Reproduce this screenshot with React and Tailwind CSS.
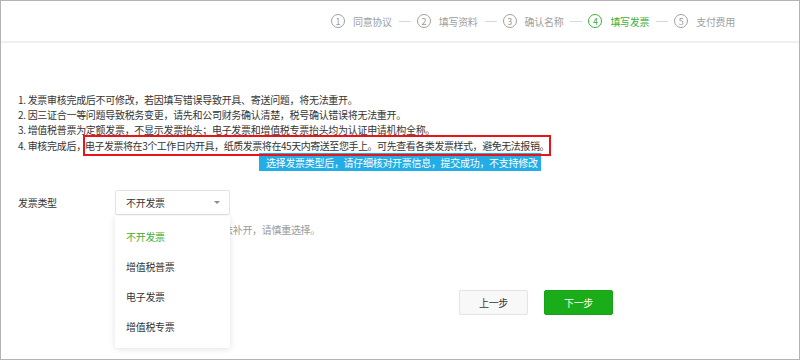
import React from "react";

const steps = [
  { n: "1", label: "同意协议" },
  { n: "2", label: "填写资料" },
  { n: "3", label: "确认名称" },
  { n: "4", label: "填写发票", active: true },
  { n: "5", label: "支付费用" },
];

const options = ["不开发票", "增值税普票", "电子发票", "增值税专票"];

const App = () => {
  return (
    <div
      className="w-[800px] h-[360px] bg-white border border-[#b4b4b4] overflow-hidden text-[10px] text-[#353535] tracking-[-0.3px]"
      style={{ fontFamily: '"Noto Sans CJK SC", "Noto Sans", sans-serif' }}
    >
      {/* steps header */}
      <div className="h-[42px] border-b-2 border-[#f0f0f0] flex items-center justify-end pr-[64px]">
        {steps.map((s, i) => (
          <div key={s.n} className="flex items-center">
            <span
              className={`w-[14px] h-[14px] rounded-full border flex items-center justify-center text-[9px] leading-none ${
                s.active ? "border-[#3cb035] text-[#3cb035]" : "border-[#a0a0a0] text-[#9a9a9a]"
              }`}
            >
              {s.n}
            </span>
            <span
              className={`ml-[8px] ${s.active ? "text-[#3cb035]" : "text-[#a0a0a0]"}`}
            >
              {s.label}
            </span>
            {i < steps.length - 1 && (
              <span className="ml-[7px] mr-[6px] w-[12px] h-px bg-[#d8d8d8]" />
            )}
          </div>
        ))}
      </div>

      {/* notes */}
      <div className="pl-[17px] pt-[49px] leading-[15px]">
        <p>1. 发票审核完成后不可修改，若因填写错误导致开具、寄送问题，将无法重开。</p>
        <p>2. 因三证合一等问题导致税务变更，请先和公司财务确认清楚，税号确认错误将无法重开。</p>
        <p>3. 增值税普票为定额发票，不显示发票抬头；电子发票和增值税专票抬头均为认证申请机构全称。</p>
        <p className="mt-[1px]">
          4. 审核完成后，
          <span className="-ml-[3px] border-2 border-[#e8141a] py-[1px] tracking-[-0.45px]">
            电子发票将在3个工作日内开具，纸质发票将在45天内寄送至您手上。可先查看各类发票样式，避免无法报销。
          </span>
        </p>
        <div className="ml-[241px] mt-0 w-[282px] h-[18px] bg-[#22ade6] text-white flex items-center pl-[7px]">
          选择发票类型后，请仔细核对开票信息，提交成功，不支持修改
        </div>
      </div>

      {/* invoice type */}
      <div className="flex mt-[19px] pl-[17px]">
        <div className="w-[97px] pt-[5px]">发票类型</div>
        <div className="relative">
          <div className="w-[115px] h-[25px] border border-[#e3e3e3] rounded-[2px] flex items-center justify-between pl-[10px] pr-[9px]">
            <span>不开发票</span>
            <span className="w-0 h-0 border-l-[3px] border-r-[3px] border-t-[3px] border-l-transparent border-r-transparent border-t-[#8c8c8c]" />
          </div>
          <div className="mt-[7px] pl-[11px] text-[#9a9a9a] whitespace-nowrap">
            选择不开发票后，将无法补开，请慎重选择。
          </div>
          <div className="absolute left-0 top-[26px] w-[115px] h-[132px] bg-white rounded-[2px] shadow-[0_1px_6px_rgba(0,0,0,0.12)] pt-[6px]">
            {options.map((o, i) => (
              <div
                key={o}
                className={`h-[30px] leading-[30px] pl-[11px] ${i === 0 ? "text-[#3cb035]" : "text-[#353535]"}`}
              >
                {o}
              </div>
            ))}
          </div>
        </div>
      </div>

      {/* buttons */}
      <div className="flex gap-[16px] pl-[458px] mt-[53px]">
        <button className="w-[69px] h-[25px] bg-[#f8f8f8] border border-[#e4e4e4] rounded-[2px] text-[#353535]">
          上一步
        </button>
        <button className="w-[69px] h-[25px] bg-[#1aad19] border border-[#18a317] rounded-[2px] text-white">
          下一步
        </button>
      </div>
    </div>
  );
};

export default App;
